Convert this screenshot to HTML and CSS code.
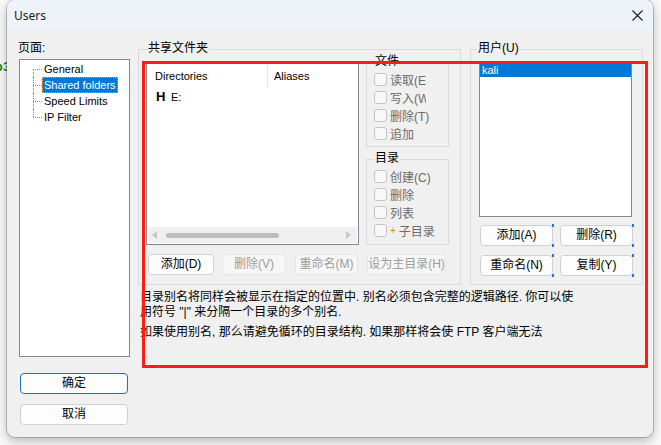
FILE: index.html
```html
<!DOCTYPE html>
<html lang="zh-CN">
<head>
<meta charset="utf-8">
<title>Users</title>
<link rel="stylesheet" href="styles.css">
</head>
<body>
  <div class="behind">p3</div>
  <div class="window">
    <div class="titlebar">
      <span class="title">Users</span>
      <svg class="close" width="11" height="11" viewBox="0 0 11 11">
        <path d="M0.5 0.5 L10.5 10.5 M10.5 0.5 L0.5 10.5" stroke="#1b1b1b" stroke-width="1.1" fill="none"/>
      </svg>
    </div>

    <div class="client">
      <!-- page list + dialog buttons -->
      <div class="side">
        <div class="side-label">页面:</div>
        <div class="tree">
          <div class="tree-item first"><span>General</span></div>
          <div class="tree-item"><span class="selected">Shared folders</span></div>
          <div class="tree-item"><span>Speed Limits</span></div>
          <div class="tree-item last"><span>IP Filter</span></div>
        </div>
        <button class="btn side-btn btn-default">确定</button>
        <button class="btn side-btn second">取消</button>
      </div>

      <div class="main">
        <div class="main-top">
          <div class="group group-shared">
            <div class="group-title">共享文件夹</div>
            <div class="shared-body">
              <div class="dir-pane">
                <div class="listview">
                  <div class="lv-header">
                    <span class="col-dir">Directories</span>
                    <span class="col-alias">Aliases</span>
                  </div>
                  <div class="lv-row"><span class="home-mark">H</span>E:</div>
                  <div class="lv-fill"></div>
                  <div class="hscroll">
                    <svg width="5" height="8" viewBox="0 0 5 8"><path d="M5 0 L0 4 L5 8 Z" fill="#c8c8c8"/></svg>
                    <div class="thumb"></div>
                    <div class="lv-fill"></div>
                    <svg width="5" height="8" viewBox="0 0 5 8"><path d="M0 0 L5 4 L0 8 Z" fill="#c8c8c8"/></svg>
                  </div>
                </div>
                <div class="btn-row">
                  <button class="btn w-add">添加(D)</button>
                  <button class="btn w-del" disabled>删除(V)</button>
                  <button class="btn w-ren" disabled>重命名(M)</button>
                </div>
              </div>

              <div class="perm-pane">
                <div class="group perm perm-file">
                  <div class="group-title">文件</div>
                  <div class="checks">
                    <div class="check cut"><span class="cb"></span>读取(E)</div>
                    <div class="check cut"><span class="cb"></span>写入(W)</div>
                    <div class="check"><span class="cb"></span>删除(T)</div>
                    <div class="check"><span class="cb"></span>追加</div>
                  </div>
                </div>
                <div class="group perm perm-dir">
                  <div class="group-title">目录</div>
                  <div class="checks">
                    <div class="check"><span class="cb"></span>创建(C)</div>
                    <div class="check"><span class="cb"></span>删除</div>
                    <div class="check"><span class="cb"></span>列表</div>
                    <div class="check"><span class="cb"></span><span class="plus">+</span>子目录</div>
                  </div>
                </div>
                <button class="btn w-home" disabled>设为主目录(H)</button>
              </div>
            </div>
          </div>

          <div class="group group-users">
            <div class="group-title">用户(U)</div>
            <div class="userlist">
              <div class="user selected-row">kali</div>
            </div>
            <div class="user-btns">
              <button class="btn ubtn">添加(A)</button>
              <button class="btn ubtn">删除(R)</button>
              <button class="btn ubtn">重命名(N)</button>
              <button class="btn ubtn">复制(Y)</button>
            </div>
          </div>
        </div>

        <div class="note">
          <p>目录别名将同样会被显示在指定的位置中. 别名必须包含完整的逻辑路径. 你可以使<br>用符号 "|" 来分隔一个目录的多个别名.</p>
          <p>如果使用别名, 那么请避免循环的目录结构. 如果那样将会使 FTP 客户端无法</p>
        </div>
      </div>
    </div>

    <div class="highlight"></div>
  </div>
</body>
</html>
```

FILE: styles.css
```css
* {
  box-sizing: border-box;
}

body {
  margin: 0;
  height: 445px;
  overflow: hidden;
  position: relative;
  background: #fafafa;
  font-family: "Liberation Sans", "Noto Sans CJK SC", sans-serif;
  font-size: 12px;
  color: #000;
}

/* bit of the window underneath */
.behind {
  position: absolute;
  left: -5px;
  top: 60px;
  color: #16891a;
  font: bold 13px "Liberation Mono", monospace;
}

.window {
  position: relative;
  margin-left: 7px;
  width: 646px;
  height: 437px;
  background: #f0f0f0;
  border-radius: 8px;
  box-shadow: 0 0 0 1px rgba(0, 0, 0, 0.2), 0 4px 12px rgba(0, 0, 0, 0.28);
  overflow: hidden;
}

.titlebar {
  height: 31px;
  background: #eef2f9;
  display: flex;
  align-items: center;
  justify-content: space-between;
  padding: 0 10px 0 7px;
}

.title {
  font-family: "Noto Sans", "Liberation Sans", sans-serif;
  font-size: 12px;
  color: #1a1a1a;
}

.client {
  display: flex;
  padding: 10px 0 0 11px;
}

/* left column */
.side {
  width: 112px;
  display: flex;
  flex-direction: column;
}

.side-label {
  height: 14px;
  line-height: 14px;
  margin-bottom: 4px;
}

.tree {
  margin-left: 1px;
  width: 111px;
  height: 298px;
  border: 1px solid #828790;
  background: #fff;
  padding: 1px 0 0 13px;
  font-size: 11px;
}

.tree-item {
  position: relative;
  height: 16px;
  padding-left: 9px;
  display: flex;
  align-items: center;
}

.tree-item::before {
  content: "";
  position: absolute;
  left: 0;
  top: 8px;
  width: 9px;
  border-top: 1px dotted #8c8c8c;
}

.tree-item::after {
  content: "";
  position: absolute;
  left: 0;
  top: 0;
  bottom: 0;
  border-left: 1px dotted #8c8c8c;
}

.tree-item.first::after {
  top: 8px;
}

.tree-item.last::after {
  bottom: 8px;
}

.tree-item span {
  padding: 0 1px;
  line-height: 14px;
  border: 1px solid transparent;
}

.tree-item .selected {
  background: #0078d7;
  color: #fff;
  border: 1px dotted #f0a030;
}

.btn {
  height: 21px;
  padding: 0;
  border: 1px solid #d0d0d0;
  border-radius: 4px;
  background: #fdfdfd;
  font-family: "Liberation Sans", "Noto Sans CJK SC", sans-serif;
  font-size: 12px;
  color: #000;
  line-height: 19px;
}

.btn:disabled {
  background: #f6f6f6;
  border-color: #e6e6e6;
  color: #9d9d9d;
}

.side-btn {
  width: 108px;
  margin: 16px 0 0 2px;
}

.side-btn.second {
  margin-top: 10px;
}

.btn-default {
  border-color: #1b6fc4;
}

/* main area */
.main {
  margin-left: 8px;
}

.main-top {
  display: flex;
  gap: 9px;
}

.group {
  border: 1px solid #dadada;
}

.group-title {
  width: fit-content;
  margin: -9px 0 0 8px;
  padding: 0 1px;
  height: 15px;
  line-height: 15px;
  background: #f0f0f0;
}

.group-shared {
  margin-top: 8px;
  width: 323px;
  height: 236px;
}

.shared-body {
  display: flex;
  padding-left: 7px;
  margin-top: 6px;
}

.dir-pane {
  width: 213px;
}

.listview {
  height: 183px;
  border: 1px solid #828790;
  background: #fff;
  display: flex;
  flex-direction: column;
  font-size: 11px;
}

.lv-header {
  display: flex;
  height: 25px;
  align-items: center;
}

.col-dir {
  width: 121px;
  height: 100%;
  padding-left: 8px;
  border-right: 1px solid #e5e5e5;
  display: flex;
  align-items: center;
}

.col-alias {
  padding-left: 6px;
}

.lv-row {
  height: 17px;
  display: flex;
  align-items: center;
  padding-left: 9px;
}

.home-mark {
  width: 15px;
  font-weight: bold;
  font-size: 13px;
}

.lv-fill {
  flex: 1;
}

.hscroll {
  height: 16px;
  margin: 0 1px 1px 1px;
  background: #f0f0f0;
  display: flex;
  align-items: center;
  padding: 0 6px 0 4px;
}

.hscroll .thumb {
  margin-left: 9px;
  width: 113px;
  height: 5px;
  border-radius: 3px;
  background: #bdbdbd;
}

.btn-row {
  display: flex;
  margin: 9px 0 0 2px;
}

.w-add {
  width: 66px;
}

.w-del {
  width: 64px;
  margin-left: 8px;
}

.w-ren {
  width: 63px;
  margin-left: 9px;
}

.perm-pane {
  width: 83px;
  margin-left: 7px;
}

.perm .group-title {
  margin-left: 7px;
}

.perm-file {
  height: 85px;
}

.perm-dir {
  height: 86px;
  margin-top: 12px;
}

.checks {
  padding-left: 7px;
  margin-top: 1px;
}

.check {
  height: 18px;
  display: flex;
  align-items: center;
  white-space: nowrap;
  overflow: hidden;
  color: #6b6b6b;
}

.check.cut {
  width: 52px;
}

.cb {
  flex: none;
  width: 13px;
  height: 13px;
  margin-right: 3px;
  border: 1px solid #c4c4c4;
  border-radius: 3px;
  background: #f8f8f8;
}

.plus {
  color: #e08a2c;
  font-size: 10px;
  margin-right: 3px;
}

.w-home {
  width: 79px;
  margin: 9px 0 0 1px;
  white-space: nowrap;
}

/* users */
.group-users {
  margin-top: 8px;
  width: 173px;
  height: 236px;
}

.group-users .group-title {
  margin-left: 6px;
}

.userlist {
  margin: 7px 0 0 8px;
  width: 153px;
  height: 154px;
  border: 1px solid #828790;
  background: #fff;
  font-size: 11px;
}

.user {
  height: 13px;
  line-height: 13px;
  padding-left: 2px;
}

.selected-row {
  background: #0078d7;
  color: #fff;
}

.user-btns {
  display: grid;
  grid-template-columns: 73px 73px;
  column-gap: 7px;
  row-gap: 9px;
  margin: 8px 0 0 9px;
}

.ubtn {
  position: relative;
}

.ubtn::before,
.ubtn::after {
  content: "";
  position: absolute;
  right: -2px;
  width: 2px;
  height: 3px;
  background: #1f78d1;
}

.ubtn::before {
  top: -2px;
}

.ubtn::after {
  bottom: -2px;
}

.note {
  margin: 5px 0 0 2px;
  white-space: nowrap;
}

.note p {
  margin: 0 0 5px;
  line-height: 15px;
}

/* red marker drawn over the dialog */
.highlight {
  position: absolute;
  left: 135px;
  top: 61px;
  width: 506px;
  height: 307px;
  border: 3px solid #ff1d12;
}
```
